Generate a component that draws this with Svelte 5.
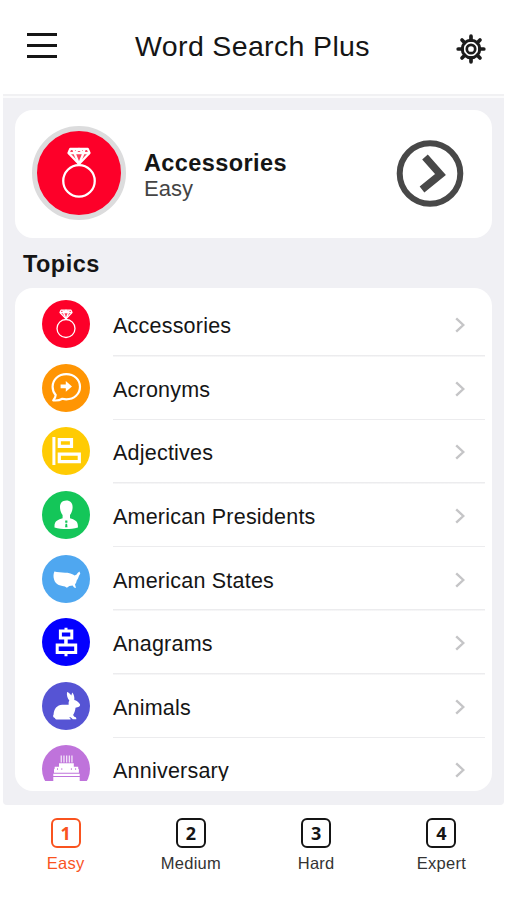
<script>
  const topics = [
    { name: 'Accessories', color: '#fd0029', icon: 'ring' },
    { name: 'Acronyms', color: '#ff9503', icon: 'bubble' },
    { name: 'Adjectives', color: '#ffcb03', icon: 'alignLeft' },
    { name: 'American Presidents', color: '#14c659', icon: 'person' },
    { name: 'American States', color: '#4fa7f0', icon: 'usa' },
    { name: 'Anagrams', color: '#0400ff', icon: 'alignCenter' },
    { name: 'Animals', color: '#5654d4', icon: 'rabbit' },
    { name: 'Anniversary', color: '#bf73db', icon: 'cake' },
  ];

  const levels = ['Easy', 'Medium', 'Hard', 'Expert'];

  let topic = $state(topics[0]);
  let level = $state(0);
</script>

<!-- all icons are drawn in a 48x48 box, same size as the circle -->
{#snippet icon(name)}
  <svg class="icon" viewBox="0 0 48 48">
    {#if name === 'ring'}
      <g fill="none" stroke="#fff" stroke-width="1.3" stroke-linejoin="round">
        <circle cx="24" cy="28.5" r="9" />
        <path d="M19 10.200h10l1 2.400-6 6.300-6-6.300z" fill="#fff" fill-opacity="0.25" />
        <path d="M18 12.600h12M21.400 12.600l2.600 6.300 2.600-6.300M20.800 10.200l.6 2.400 2.600-2.400 2.600 2.400.6-2.400" />
      </g>
    {:else if name === 'bubble'}
      <path d="M11.200 36.400c1.600-1.800 2.400-3.400 2.500-5.400C11.600 28.700 10.600 26 10.600 22.800c0-7.200 6-12.600 13.700-12.600S38 15.600 38 22.800 32.100 35.300 24.300 35.300c-1.500 0-2.700-.2-4-.5-2.200 1.300-5 2-9.100 1.600z" fill="none" stroke="#fff" stroke-width="2.200" stroke-linejoin="round" />
      <path d="M18.600 20.500h5.200v-3.400l6.200 5.300-6.200 5.300v-3.400h-5.200z" fill="#fff" />
    {:else if name === 'alignLeft'}
      <path d="M10.400 10h3v28h-3z" fill="#fff" />
      <path d="M17.300 12.600h12.200v6.700H17.300zM17.300 27.200h20v7.400h-20z" fill="none" stroke="#fff" stroke-width="3.200" />
    {:else if name === 'person'}
      <path d="M24.300 9.500c4.200 0 6.500 2.900 6.300 6.900-.1 3.400-1.300 6-2.600 7.500v3.300c4.300 1.300 7.900 2.600 7.900 7.700v1.700c-3.800 1-7.800 1.500-11.600 1.500s-8-.5-11.800-1.500v-1.700c0-5.100 3.800-6.400 8.100-7.700v-3.300c-1.300-1.500-2.500-4.100-2.600-7.500-.1-4 2.100-6.900 6.300-6.900z" fill="#fff" />
      <path d="M23.200 29.400h2.200v2.400h-2.200zM23.500 32.800h1.600l.4 3.400h-2.400z" fill="#14c659" />
    {:else if name === 'usa'}
      <path d="M12.400 16.600c3.800.9 8.600 1.300 13 1.100l3 .9 2.600 1 1.600 1 2-1.100 1-1.600 1.800-1.500.9 2.100-1.300 2.200-1 2.700-1.300 2-.5 2.200-1.200 1.900 1 3.600-1.900-.6-1.500-2-3.200.6-2.500 1.600-2-1.200-2.500-.4-3.700-1.200c-2.300-1.100-4-2.800-4.700-5.700-.8-2.600-.6-5.300.4-7.600z" fill="#fff" />
    {:else if name === 'alignCenter'}
      <path d="M22.500 9.800h3v3h-3zM22.200 20.500h3.500v6h-3.500zM22.500 35h3v3.200h-3z" fill="#fff" />
      <path d="M18.400 13h11.400v7H18.400zM15.200 27h18.500v7.500H15.200z" fill="none" stroke="#fff" stroke-width="3" />
    {:else if name === 'rabbit'}
      <path d="M25 10c2 .6 3.400 2 4.300 3.600l.9-3.200c1.800 1.800 2.400 4.800 2.100 7.600 2.200.5 4.300 1.900 5.700 4.200.3 1.200-.3 2.300-1.700 2.700l-2.800.9c-.2 2.800-1.200 5.300-2.400 7.100l1.200 1.900c1.500.1 2.200.9 2 2.400h-3.500l-2.200-2-1.800.4c1.200.3 1.900.8 1.900 1.900H15.400c-1.300 0-2.200-.5-2.500-1.500-1.700-.2-2.300-2-1.300-3.400.1-5.600 3.800-10 8.700-9.900 2.800 0 4.900.3 6.600-.2-.6-1.500-.3-2.700.4-4-1.800-2.100-2.800-5-2.300-8.500z" fill="#fff" />
    {:else if name === 'cake'}
      <path d="M18.600 10.400h1.300v7.200h-1.300zM21.300 10.400h1.300v7.200h-1.300zM24 10.400h1.300v7.200H24zM26.700 10.400H28v7.200h-1.300zM29.300 10.400h1.300v7.200h-1.300z" fill="#fff" opacity=".8" />
      <path d="M17 18.200h14.800v3.600h4.400v1.600l.7 1v3.400H12v-3.400l.7-1v-1.600H17zM11.300 28.700h26.400v2.200H11.300zM11.300 32h26.400v4.500H11.300z" fill="#fff" />
      <path d="M15.500 23.300v1.500M19.800 23.300v1.500M29.400 23.300v1.500M33.600 23.300v1.500" stroke="#bf73db" />
    {/if}
  </svg>
{/snippet}

<div class="app">
  <header>
    <button class="menu" aria-label="Menu"><span></span><span></span><span></span></button>
    <h1>Word Search Plus</h1>
    <button class="settings" aria-label="Settings">
      <svg viewBox="0 0 30 30">
        <g stroke="#1c1c1c" fill="none">
          <circle cx="15" cy="15" r="8.800" stroke-width="3" />
          <circle cx="15" cy="15" r="4.200" stroke-width="2.700" />
          <path d="M15 2.200v4M15 23.800v4M2.200 15h4M23.800 15h4M6 6l2.700 2.700M21.300 21.300 24 24M24 6l-2.700 2.700M8.700 21.300 6 24" stroke-width="3.700" stroke-linecap="round" />
        </g>
      </svg>
    </button>
  </header>

  <main>
    <section class="current">
      <div class="badge" style="background: {topic.color}">{@render icon(topic.icon)}</div>
      <div class="info">
        <strong>{topic.name}</strong>
        <span>{levels[level]}</span>
      </div>
      <button class="play" aria-label="Play">
        <svg viewBox="0 0 68 68">
          <circle cx="34" cy="33.500" r="30.300" fill="none" stroke="#484848" stroke-width="6" />
          <path d="M29 17 44.500 34.500 26 49.500" fill="none" stroke="#484848" stroke-width="7.500" />
        </svg>
      </button>
    </section>

    <h2>Topics</h2>

    <section class="list">
      <ul>
        {#each topics as item (item.name)}
          <li>
            <button class="row" onclick={() => (topic = item)}>
              <span class="circle" style="background: {item.color}">{@render icon(item.icon)}</span>
              <span class="name">{item.name}</span>
              <svg class="chevron" viewBox="0 0 10 16">
                <path d="M1.200 1.300 8.300 8l-7.100 6.700" fill="none" stroke="#c5c5c7" stroke-width="2.400" />
              </svg>
            </button>
          </li>
        {/each}
      </ul>
    </section>
  </main>

  <nav>
    {#each levels as name, i}
      <button class="tab" class:active={level === i} onclick={() => (level = i)}>
        <span class="number">{i + 1}</span>
        <span class="label">{name}</span>
      </button>
    {/each}
  </nav>
</div>

<style>
  :global(body) {
    background: #fff;
  }

  .app {
    width: 506px;
    height: 900px;
    overflow: hidden;
    display: flex;
    flex-direction: column;
    font-family: "Liberation Sans", Arial, sans-serif;
    color: #151515;
  }

  button {
    background: none;
    border: 0;
    padding: 0;
    margin: 0;
    font: inherit;
    color: inherit;
    letter-spacing: inherit;
    cursor: pointer;
  }

  svg {
    display: block;
  }

  /* top bar */
  header {
    height: 94px;
    margin: 0 5px;
    padding: 0 15px 0 22px;
    box-sizing: border-box;
    display: flex;
    justify-content: space-between;
    align-items: flex-start;
    flex-shrink: 0;
  }

  .menu {
    width: 30px;
    margin-top: 33px;
    display: flex;
    flex-direction: column;
    gap: 8px;
  }

  .menu span {
    height: 3px;
    background: #161616;
  }

  h1 {
    margin: 30px 8px 0 0;
    font-size: 28.500px;
    line-height: 32px;
    font-weight: normal;
    letter-spacing: 0.350px;
  }

  .settings {
    width: 30px;
    height: 30px;
    margin-top: 34px;
  }

  main {
    height: 711px;
    margin: 0 2px 0 3px;
    padding: 12px 12px 0;
    box-sizing: border-box;
    background: #f0f0f4;
    border-top: 2px solid #f1f1f3;
    border-radius: 0 0 4px 4px;
    box-shadow: inset 0 2px #fbfbfc;
    flex-shrink: 0;
  }

  /* selected topic */
  .current {
    height: 128px;
    margin-top: 2px;
    padding: 0 28px 0 17px;
    box-sizing: border-box;
    display: flex;
    align-items: center;
    background: #fff;
    border-radius: 18px;
  }

  .badge {
    width: 84px;
    height: 84px;
    border: 5px solid #dcdcdd;
    border-radius: 50%;
    margin-top: -2px;
  }

  .badge .icon {
    width: 84px;
    height: 84px;
  }

  .info {
    flex: 1;
    margin: 3px 0 0 18px;
    display: flex;
    flex-direction: column;
  }

  .info strong {
    font-size: 23.500px;
    line-height: 26px;
    letter-spacing: 0.400px;
  }

  .info span {
    font-size: 22px;
    line-height: 26px;
    color: #444;
  }

  .play {
    width: 68px;
    height: 68px;
  }

  h2 {
    margin: 13px 0 11px 8px;
    font-size: 23.500px;
    line-height: 26px;
    letter-spacing: 0.450px;
  }

  .list {
    height: 503px;
    padding-bottom: 10px;
    box-sizing: border-box;
    background: #fff;
    border-radius: 18px;
  }

  ul {
    height: 493px;
    margin: 0;
    padding: 5px 0 0;
    box-sizing: border-box;
    list-style: none;
    overflow: hidden;
  }

  .row {
    width: 100%;
    height: 63.600px;
    padding: 0 26px 0 27px;
    display: flex;
    align-items: center;
    text-align: left;
    background: linear-gradient(#ececee, #ececee) 98px 100% / 372px 1.500px no-repeat;
  }

  .circle {
    width: 48px;
    height: 48px;
    margin-top: -1px;
    border-radius: 50%;
  }

  .name {
    flex: 1;
    margin: 3px 0 0 23px;
    font-size: 21.500px;
    line-height: 26px;
    letter-spacing: 0.220px;
  }

  .chevron {
    width: 10px;
    height: 16px;
    margin-top: 1px;
    transform: translateX(-1px);
  }

  /* level tabs */
  nav {
    margin: 0 2px 0 3px;
    padding-top: 13px;
    display: flex;
  }

  .tab {
    flex: 1;
    display: flex;
    flex-direction: column;
    align-items: center;
  }

  .number {
    width: 30px;
    height: 30px;
    box-sizing: border-box;
    border: 2px solid currentColor;
    border-radius: 6px;
    font: bold 18px/26px "Open Sans", sans-serif;
    letter-spacing: 0;
    text-align: center;
  }

  .label {
    margin-top: 5px;
    font-size: 16.500px;
    line-height: 20px;
    letter-spacing: 0.250px;
    color: #333;
  }

  .active,
  .active .label {
    color: #f9531f;
  }
</style>
